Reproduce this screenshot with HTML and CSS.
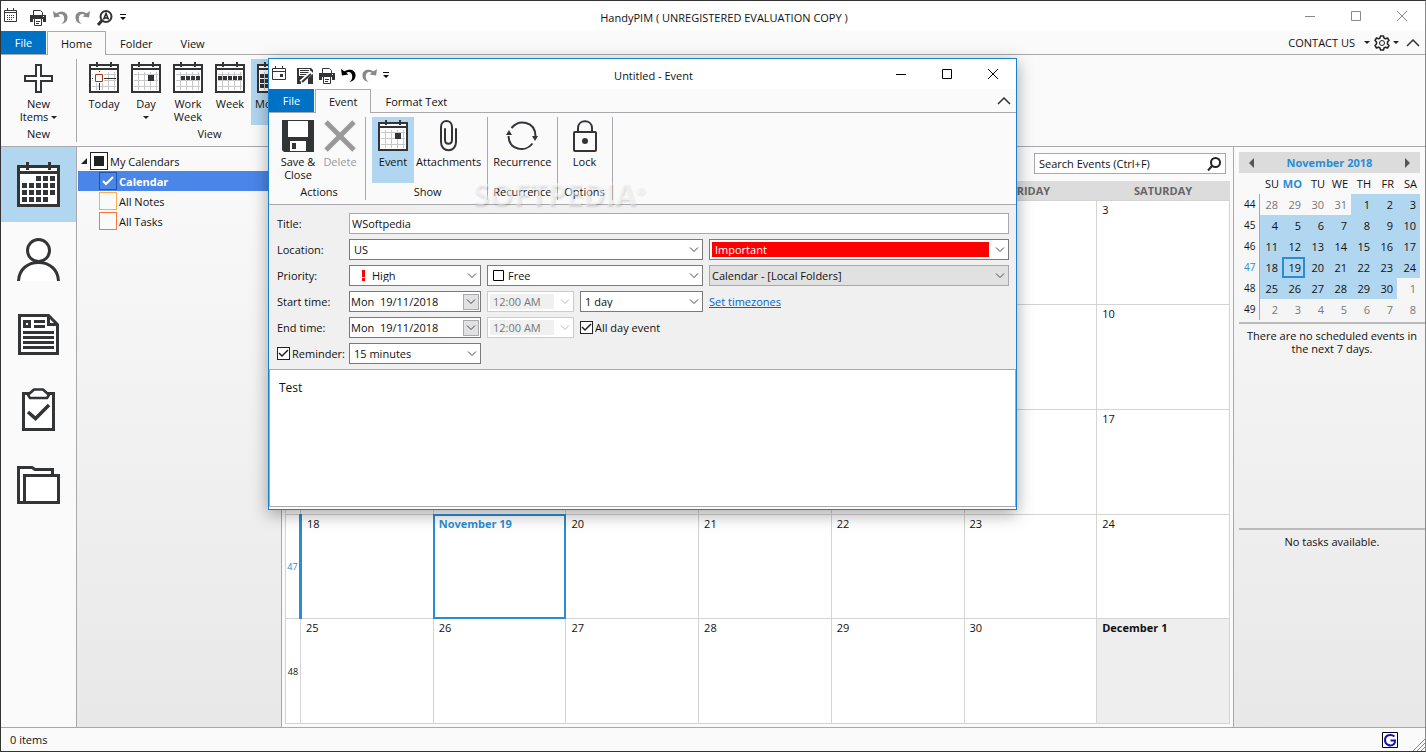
FILE: index.html
```html
<!DOCTYPE html>
<html lang="en">
<head>
    <meta charset="UTF-8">
    <meta name="viewport" content="width=device-width, initial-scale=1.0">
    <title>HandyPIM</title>
    <link rel="stylesheet" href="styles.css">
</head>
<body>
    <!-- shared icons -->
    <svg class="sprite" width="0" height="0" aria-hidden="true">
        <symbol id="cal" viewBox="0 0 30 32">
            <g shape-rendering="crispEdges">
                <path fill="#fff" d="M1 3h28v27H1z"/>
                <path stroke="#c8c8c8" fill="none" stroke-width="1" d="M7.500 10v18M13.500 10v18M19.500 10v18M25.500 10v18M3 12.500h24M3 18.500h24M3 24.500h24"/>
                <path fill="none" stroke="#333436" stroke-width="2" d="M1 3h28v27H1zM1 7h28M8 0v5M22 0v5"/>
            </g>
        </symbol>
        <symbol id="printer" viewBox="0 0 16 16">
            <path fill="#333436" d="M0 5h16v7h-3V9H3v3H0z"/>
            <path fill="#fff" stroke="#333436" d="M3.500 5.500v-5h7l2 2v3zM4.500 8.500h7v7h-7z"/>
            <path stroke="#333436" d="M6 11.500h4M6 13.500h3"/>
            <path fill="#fff" d="M13 6h1v1h-1z"/>
        </symbol>
        <symbol id="undo" viewBox="0 0 16 16">
            <path fill="currentColor" d="M0 1l1 7 7-1-2.500-2C9 3 12 5 12 9c0 3-1 4-3 6 5-1 6.500-4 6.500-7.500C15.500 2 9 0 3.500 3.500z"/>
        </symbol>
        <symbol id="redo" viewBox="0 0 16 16">
            <path fill="currentColor" d="M16 1l-1 7-7-1 2.500-2C7 3 4 5 4 9c0 3 1 4 3 6C2 14 .5 11 .5 7.500.5 2 7 0 12.500 3.500z"/>
        </symbol>
        <symbol id="more" viewBox="0 0 6 7">
            <path fill="#111" d="M0 0h6v1H0zM0 3h6L3 6z"/>
        </symbol>
        <symbol id="up" viewBox="0 0 14 8">
            <path fill="none" stroke="#333" stroke-width="1.500" d="M1 7l6-6 6 6"/>
        </symbol>
        <symbol id="down" viewBox="0 0 6 4">
            <path fill="#222" d="M0 0h6L3 3z"/>
        </symbol>
        <symbol id="min" viewBox="0 0 10 10"><path stroke="currentColor" d="M0 5.500h10"/></symbol>
        <symbol id="max" viewBox="0 0 10 10"><path fill="none" stroke="currentColor" d="M.5.5h9v9h-9z"/></symbol>
        <symbol id="close" viewBox="0 0 10 10"><path stroke="currentColor" d="M0 0l10 10M10 0L0 10"/></symbol>
    </svg>

    <header class="titlebar">
        <div class="quick">
            <svg class="app-icon" width="14" height="15" viewBox="0 0 14 15"><path fill="none" stroke="#333436" d="M.5 2.500h12v11H.5zM0 4.500h13M3.500 0v3M9.500 0v3"/><path stroke="#333436" stroke-dasharray="1 1" d="M3 7.500h8M3 9.500h8M3 11.500h6"/></svg>
            <button aria-label="Print"><svg width="16" height="16"><use href="#printer"/></svg></button>
            <button aria-label="Undo" class="off"><svg width="15" height="15"><use href="#undo"/></svg></button>
            <button aria-label="Redo" class="off"><svg width="15" height="15"><use href="#redo"/></svg></button>
            <button aria-label="Find"><svg width="16" height="16" viewBox="0 0 16 16"><circle cx="9" cy="6.500" r="5.500" fill="#fff" stroke="#333436" stroke-width="2"/><path stroke="#333436" stroke-width="3" d="M5 10.500L1 15"/><path fill="none" stroke="#222" stroke-width="1.500" d="M6.500 9.500L9 3.500l2.500 6M7.500 8h3"/></svg></button>
            <button aria-label="Customize"><svg width="6" height="7"><use href="#more"/></svg></button>
        </div>
        <h1>HandyPIM ( UNREGISTERED EVALUATION COPY )</h1>
        <div class="winbtns">
            <button aria-label="Minimize"><svg width="10" height="10"><use href="#min"/></svg></button>
            <button aria-label="Maximize"><svg width="10" height="10"><use href="#max"/></svg></button>
            <button aria-label="Close"><svg width="10" height="10"><use href="#close"/></svg></button>
        </div>
    </header>

    <nav class="tabs">
        <button class="tab file">File</button>
        <button class="tab active">Home</button>
        <button class="tab">Folder</button>
        <button class="tab">View</button>
        <div class="tabs-right">
            <button>CONTACT US <svg width="6" height="4"><use href="#down"/></svg></button>
            <button aria-label="Settings" class="settings"><svg width="16" height="16" viewBox="0 0 16 16"><path fill="none" stroke="#222" stroke-width="1.500" stroke-linejoin="round" d="M6.500 1h3l.5 2 1.500.8 2-.8 1.500 2.500L13.500 7v2l1.500 1.500-1.500 2.500-2-.8-1.500.8-.5 2h-3L6 13l-1.500-.8-2 .8L1 10.500 2.500 9V7L1 5.500 2.500 3l2 .8L6 3z"/><circle cx="8" cy="8" r="2.500" fill="none" stroke="#222"/></svg><svg width="6" height="4"><use href="#down"/></svg></button>
            <button aria-label="Collapse ribbon"><svg width="14" height="8"><use href="#up"/></svg></button>
        </div>
    </nav>

    <section class="ribbon">
        <div class="group group-new">
            <div class="items">
                <button class="rbtn"><svg width="30" height="32" viewBox="0 0 30 32"><path fill="#fff" stroke="#333436" stroke-width="2" d="M12 3h5v11h11v5H17v11h-5V19H1v-5h11z"/></svg><span>New<br>Items <svg width="6" height="4"><use href="#down"/></svg></span></button>
            </div>
            <div class="caption">New</div>
        </div>
        <div class="group group-view">
            <div class="items">
                <button class="rbtn"><svg width="30" height="32" viewBox="0 0 30 32"><use href="#cal"/><path stroke="#333436" d="M3 16.500h24M10.500 9v19"/><path fill="#fff" d="M4 10h11v11H4z"/><path fill="#fff" stroke="#b03010" d="M6.500 12.500h7v7h-7z"/></svg><span>Today</span></button>
                <button class="rbtn"><svg width="30" height="32" viewBox="0 0 30 32"><use href="#cal"/><path fill="#333436" d="M17 13h6v6h-6z"/></svg><span>Day<br><svg width="6" height="4"><use href="#down"/></svg></span></button>
                <button class="rbtn"><svg width="30" height="32" viewBox="0 0 30 32"><use href="#cal"/><path fill="#333436" d="M8 14h4v4H8zM13 14h4v4h-4zM18 14h4v4h-4zM23 14h4v4h-4z"/></svg><span>Work<br>Week</span></button>
                <button class="rbtn"><svg width="30" height="32" viewBox="0 0 30 32"><use href="#cal"/><path fill="#333436" d="M3 14h4v4H3zM8 14h4v4H8zM13 14h4v4h-4zM18 14h4v4h-4zM23 14h4v4h-4z"/></svg><span>Week</span></button>
                <button class="rbtn on"><svg width="30" height="32" viewBox="0 0 30 32"><use href="#cal"/><path stroke="#333436" stroke-width="4" stroke-dasharray="4 1" d="M3 14h24M3 19h24M3 24h24"/></svg><span>Month</span></button>
            </div>
            <div class="caption">View</div>
        </div>
    </section>

    <main class="workspace">
        <nav class="modules">
            <button class="on" aria-label="Calendar"><svg width="43" height="45" viewBox="0 0 43 45"><path fill="#fff" stroke="#333436" stroke-width="3" d="M1.500 4.500h40v39h-40z"/><path stroke="#333436" stroke-width="3" d="M0 10.500h43M10.500 0v8M32.500 0v8"/><path stroke="#333436" stroke-width="5" stroke-dasharray="5 2" d="M19 16.500h20M5 23.500h33M5 30.500h33M5 37.500h26"/></svg></button>
            <button aria-label="Contacts"><svg width="43" height="44" viewBox="0 0 43 44"><circle cx="21.500" cy="12.500" r="11" fill="#fff" stroke="#333436" stroke-width="3"/><path fill="#fff" stroke="#333436" stroke-width="3" d="M1.500 43C2 31 11 24.500 21.500 24.500S41 31 41.500 43"/></svg></button>
            <button aria-label="Notes"><svg width="41" height="41" viewBox="0 0 41 41"><path fill="#fff" stroke="#333436" stroke-width="3" d="M1.500 1.500h29l9 9v29h-38zM30.500 1.500v9h9"/><path fill="none" stroke="#333436" stroke-width="3" d="M6.500 7.500h5v5h-5zM16 7.500h11M16 12.500h11M5 18.500h31M5 23.500h31M5 28.500h31M5 33.500h31"/></svg></button>
            <button aria-label="Tasks"><svg width="33" height="43" viewBox="0 0 33 43"><path fill="#fff" stroke="#333436" stroke-width="3" d="M1.500 5.500h30v36h-30z"/><path fill="#fff" stroke="#333436" stroke-width="2.500" stroke-linejoin="round" d="M6 7l6-5.500h9L27 7l-2 3H8z"/><path fill="none" stroke="#333436" stroke-width="3.500" d="M6 24l7.500 6.500L27 17"/></svg></button>
            <button aria-label="Folders"><svg width="43" height="38" viewBox="0 0 43 38"><path fill="#fff" stroke="#333436" stroke-width="3" d="M1.500 1.500H15l3 2h17.500v33h-34z"/><path fill="#fff" stroke="#333436" stroke-width="3" d="M7.500 9.500h34v27h-34z"/></svg></button>
        </nav>

        <aside class="tree">
            <label class="root"><svg width="7" height="7"><path fill="#222" d="M6 0v6H0z"/></svg><input type="checkbox" class="mixed"> My Calendars</label>
            <label class="leaf selected"><input type="checkbox" class="cal-check" checked> Calendar</label>
            <label class="leaf"><input type="checkbox" class="notes"> All Notes</label>
            <label class="leaf"><input type="checkbox" class="tasks"> All Tasks</label>
        </aside>

        <section class="month-view">
            <div class="search">
                <input type="text" placeholder="Search Events (Ctrl+F)" aria-label="Search Events">
                <svg width="14" height="14" viewBox="0 0 14 14"><circle cx="8.500" cy="5.500" r="4.500" fill="none" stroke="#222" stroke-width="2"/><path stroke="#222" stroke-width="2" d="M5 9l-4 4.500"/></svg>
            </div>
            <table class="month">
                <thead>
                    <tr><th class="wk"></th><th>SUNDAY</th><th>MONDAY</th><th>TUESDAY</th><th>WEDNESDAY</th><th>THURSDAY</th><th>FRIDAY</th><th>SATURDAY</th></tr>
                </thead>
                <tbody>
                    <tr><th class="wk">44</th><td class="other">28</td><td class="other">29</td><td class="other">30</td><td class="other">31</td><td><b>November 1</b></td><td>2</td><td>3</td></tr>
                    <tr><th class="wk">45</th><td>4</td><td>5</td><td>6</td><td>7</td><td>8</td><td>9</td><td>10</td></tr>
                    <tr><th class="wk">46</th><td>11</td><td>12</td><td>13</td><td>14</td><td>15</td><td>16</td><td>17</td></tr>
                    <tr><th class="wk current">47</th><td>18</td><td class="today">November 19</td><td>20</td><td>21</td><td>22</td><td>23</td><td>24</td></tr>
                    <tr><th class="wk">48</th><td>25</td><td>26</td><td>27</td><td>28</td><td>29</td><td>30</td><td class="other"><b>December 1</b></td></tr>
                </tbody>
            </table>
        </section>

        <aside class="side">
            <div class="mini-head">
                <button aria-label="Previous month"><svg width="5" height="10"><path fill="#555" d="M5 0v10L0 5z"/></svg></button>
                <h2>November 2018</h2>
                <button aria-label="Next month"><svg width="5" height="10"><path fill="#555" d="M0 0v10l5-5z"/></svg></button>
            </div>
            <table class="mini">
                <thead>
                    <tr><th></th><th>SU</th><th class="cur">MO</th><th>TU</th><th>WE</th><th>TH</th><th>FR</th><th>SA</th></tr>
                </thead>
                <tbody>
                    <tr><th>44</th><td class="out">28</td><td class="out">29</td><td class="out">30</td><td class="out">31</td><td>1</td><td>2</td><td>3</td></tr>
                    <tr><th>45</th><td>4</td><td>5</td><td>6</td><td>7</td><td>8</td><td>9</td><td>10</td></tr>
                    <tr><th>46</th><td>11</td><td>12</td><td>13</td><td>14</td><td>15</td><td>16</td><td>17</td></tr>
                    <tr><th class="cur">47</th><td>18</td><td class="now">19</td><td>20</td><td>21</td><td>22</td><td>23</td><td>24</td></tr>
                    <tr><th>48</th><td>25</td><td>26</td><td>27</td><td>28</td><td>29</td><td>30</td><td class="out">1</td></tr>
                    <tr><th>49</th><td class="out">2</td><td class="out">3</td><td class="out">4</td><td class="out">5</td><td class="out">6</td><td class="out">7</td><td class="out">8</td></tr>
                </tbody>
            </table>
            <p class="note">There are no scheduled events in the next 7 days.</p>
            <p class="note">No tasks available.</p>
        </aside>
    </main>

    <footer class="status">
        <span>0 items</span>
        <svg class="g-logo" width="16" height="16" viewBox="0 0 16 16"><path fill="#fff" stroke="#000" d="M.5.5h15v15H.5z"/><path fill="none" stroke="#1414b0" stroke-width="2" d="M12.500 4.500C9 1.500 3 3 3 8s6 7 9 4c1-1 1-2 1-3.500H8.500"/></svg>
        <svg width="12" height="12" viewBox="0 0 12 12"><path stroke="#888" d="M0 12L12 0M4 12l8-8M8 12l4-4"/></svg>
    </footer>

    <!-- event window -->
    <div class="dialog" role="dialog" aria-label="Untitled - Event">
        <header class="titlebar">
            <div class="quick">
                <svg class="app-icon" width="14" height="15" viewBox="0 0 14 15"><path fill="none" stroke="#333436" d="M.5 2.500h13v11H.5zM0 5.500h14M3.500 0v3M10.500 0v3"/><path fill="#333436" d="M8 8h3v3H8z"/></svg>
                <button aria-label="Save"><svg width="16" height="16" viewBox="0 0 16 16"><path fill="#333436" d="M0 0h14l2 2v14H0z"/><path fill="#fff" d="M2 1h11v7H2zM4 11h7v5H4z"/><path stroke="#333436" d="M3 2.500h9M3 4.500h9M3 6.500h8"/><path stroke="#fff" stroke-width="4" d="M4 14L15 4"/><path stroke="#333436" stroke-width="2" d="M5 14l9-8"/></svg></button>
                <button aria-label="Print"><svg width="16" height="16"><use href="#printer"/></svg></button>
                <button aria-label="Undo" class="black"><svg width="15" height="15"><use href="#undo"/></svg></button>
                <button aria-label="Redo" class="off"><svg width="15" height="15"><use href="#redo"/></svg></button>
                <button aria-label="Customize"><svg width="6" height="7"><use href="#more"/></svg></button>
            </div>
            <h1>Untitled - Event</h1>
            <div class="winbtns">
                <button aria-label="Minimize"><svg width="10" height="10"><use href="#min"/></svg></button>
                <button aria-label="Maximize"><svg width="10" height="10"><use href="#max"/></svg></button>
                <button aria-label="Close"><svg width="10" height="10"><use href="#close"/></svg></button>
            </div>
        </header>
        <nav class="tabs">
            <button class="tab file">File</button>
            <button class="tab active">Event</button>
            <button class="tab">Format Text</button>
            <div class="tabs-right">
                <button aria-label="Collapse ribbon"><svg width="14" height="8"><use href="#up"/></svg></button>
            </div>
        </nav>
        <section class="ribbon">
            <div class="group group-actions">
                <div class="items">
                    <button class="rbtn"><svg width="32" height="32" viewBox="0 0 32 32"><path fill="#333436" d="M0 0h32v32H2l-2-2z"/><path fill="#fff" d="M6 1h20v16H6zM8 21h16v10H8z"/><path fill="#333436" d="M10 23h4v6h-4z"/></svg><span>Save &amp;<br>Close</span></button>
                    <button class="rbtn" disabled><svg width="32" height="32" viewBox="0 0 32 32"><path stroke="#999" stroke-width="5" d="M2 2l28 28M30 2L2 30"/></svg><span>Delete</span></button>
                </div>
                <div class="caption">Actions</div>
            </div>
            <div class="group group-show">
                <div class="items">
                    <button class="rbtn on"><svg width="30" height="32" viewBox="0 0 30 32"><use href="#cal"/><path fill="#333436" d="M17 13h6v6h-6z"/></svg><span>Event</span></button>
                    <button class="rbtn wide"><svg width="18" height="32" viewBox="0 0 18 32"><path fill="none" stroke="#333436" stroke-width="2" stroke-linecap="round" d="M5 9v11c0 5 7 5 7 0V7c0-8-11-8-11 0v15c0 11 15 11 15 0V9"/></svg><span>Attachments</span></button>
                </div>
                <div class="caption">Show</div>
            </div>
            <div class="group group-recur">
                <div class="items">
                    <button class="rbtn wide"><svg width="32" height="32" viewBox="0 0 32 32"><path fill="none" stroke="#333436" stroke-width="2" d="M5.500 8C13-1 29 1 29.500 16M26.500 23.500C19 33 3 30 2.500 16"/><path fill="#333436" d="M26 16h6l-3 5zM0 15h6l-3-5z"/></svg><span>Recurrence</span></button>
                </div>
                <div class="caption">Recurrence</div>
            </div>
            <div class="group group-options">
                <div class="items">
                    <button class="rbtn"><svg width="24" height="32" viewBox="0 0 24 32"><rect x="1" y="12" width="22" height="19" rx="1" fill="none" stroke="#333436" stroke-width="2"/><path fill="none" stroke="#333436" stroke-width="2" d="M5 12V8c0-9 14-9 14 0v4"/><circle cx="12" cy="21" r="3" fill="#333436"/></svg><span>Lock</span></button>
                </div>
                <div class="caption">Options</div>
            </div>
        </section>
        <form class="event-form">
            <label for="title">Title:</label>
            <input id="title" class="field full" type="text" value="WSoftpedia">

            <label for="location">Location:</label>
            <select id="location" class="field to-mid"><option>US</option></select>
            <div class="field pick right important">
                <select aria-label="Label"><option>Important</option></select>
            </div>

            <label for="priority">Priority:</label>
            <div class="field pick first">
                <svg width="4" height="11" viewBox="0 0 4 11"><path fill="#f00" d="M0 0h3v7H0zM0 8h3v3H0z"/></svg>
                <select id="priority"><option>High</option></select>
            </div>
            <div class="field pick middle free">
                <svg width="11" height="11"><path fill="#fff" stroke="#000" d="M.5.5h10v10H.5z"/></svg>
                <select aria-label="Show as"><option>Free</option></select>
            </div>
            <select class="field right grey" aria-label="Folder"><option>Calendar - [Local Folders]</option></select>

            <label for="start">Start time:</label>
            <div class="field date first"><input id="start" type="text" value="Mon  19/11/2018"><button type="button" aria-label="Pick start date"></button></div>
            <div class="field pick time off"><select aria-label="Start hour" disabled><option>12:00 AM</option></select></div>
            <select class="field length" aria-label="Duration"><option>1 day</option></select>
            <a class="right" href="#">Set timezones</a>

            <label for="end">End time:</label>
            <div class="field date first"><input id="end" type="text" value="Mon  19/11/2018"><button type="button" aria-label="Pick end date"></button></div>
            <div class="field pick time off"><select aria-label="End hour" disabled><option>12:00 AM</option></select></div>
            <label class="check length"><input type="checkbox" checked> All day event</label>

            <label class="check"><input type="checkbox" checked> Reminder:</label>
            <select class="field first" aria-label="Reminder time"><option>15 minutes</option></select>
        </form>
        <textarea class="body-text" aria-label="Event text">Test</textarea>
        <div class="watermark">SOFTPEDIA<sup>®</sup></div>
    </div>
</body>
</html>
```
FILE: styles.css
```css
* {
    box-sizing: border-box;
}
body {
    margin: 0;
    min-height: 100vh;
    display: flex;
    flex-direction: column;
    position: relative;
    font-family: "Open Sans", "Noto Sans", sans-serif;
    font-size: 11px;
    line-height: 13px;
    color: #111;
    background: #fafafa;
    border: 1px solid #333;
    border-right-color: #888;
}
button, input, select, textarea {
    font: inherit;
    color: inherit;
    margin: 0;
}
button {
    background: none;
    border: none;
    padding: 0;
}
svg {
    display: block;
    flex: none;
}
span svg {
    display: inline-block;
    vertical-align: middle;
}
h1, h2, p {
    margin: 0;
    font-size: inherit;
    font-weight: normal;
}
.sprite {
    position: absolute;
}

/* title bar */
.titlebar {
    display: grid;
    grid-template-columns: 1fr auto 1fr;
    align-items: center;
    height: 30px;
    background: #fff;
}
.titlebar h1 {
    padding: 2px 0 0 22px;
}
.quick {
    display: flex;
    align-items: center;
    gap: 7px;
    padding: 3px 0 0 3px;
}
.app-icon {
    margin: 0 5px 4px 0;
}
.off {
    color: #888;
}
.black {
    color: #000;
}
.winbtns {
    display: flex;
    justify-content: flex-end;
    gap: 36px;
    padding: 0 18px 1px 0;
    color: #888;
}

/* tabs */
.tabs {
    display: flex;
    height: 24px;
    border-bottom: 1px solid #a9a9ad;
}
.tab {
    padding: 0 14px;
    height: 24px;
}
.file {
    height: 23px;
    width: 45px;
    margin-right: 1px;
    padding: 0;
    background: #0072c6;
    color: #fff;
}
.tab.active {
    background: #fafafa;
    border: 1px solid #a9a9ad;
    border-bottom: none;
    padding: 0 13px;
}
.tabs-right {
    display: flex;
    align-items: center;
    gap: 7px;
    margin-left: auto;
    padding-right: 5px;
}
.tabs-right button {
    display: flex;
    align-items: center;
    gap: 9px;
}
.tabs-right .settings {
    gap: 3px;
    margin-left: -3px;
}

/* ribbon */
.ribbon {
    display: flex;
    height: 92px;
    padding: 4px 0;
    border-bottom: 1px solid #a9a9ad;
}
.group {
    display: flex;
    flex-direction: column;
    border-right: 1px solid #a9a9ad;
    padding: 0 4px;
}
.group .items {
    display: flex;
    height: 66px;
}
.caption {
    text-align: center;
    padding-top: 2px;
}
.rbtn {
    display: flex;
    flex-direction: column;
    align-items: center;
    width: 42px;
    padding-top: 3px;
    gap: 3px;
}
.rbtn.wide {
    width: auto;
    min-width: 60px;
    padding: 3px 2px 0;
}
.rbtn.on {
    background: #b1d6f0;
}
.rbtn:disabled {
    color: #999;
}
.rbtn span {
    white-space: nowrap;
}
.group-new {
    width: 76px;
}
.group-new .items {
    justify-content: center;
}
.group-view {
    min-width: 266px;
    padding: 0 6px;
}
.group-actions {
    padding-left: 8px;
}
.group-show {
    padding-left: 6px;
}
.group-recur {
    padding: 0 3px;
}
.group-options {
    padding: 0 6px;
}

/* workspace */
.workspace {
    flex: 1;
    display: flex;
}
.modules {
    width: 76px;
    border-right: 1px solid #a9a9ad;
}
.modules button {
    display: flex;
    align-items: center;
    justify-content: center;
    width: 100%;
    height: 75px;
}
.modules .on {
    background: #b1d6f0;
}
.tree {
    width: 205px;
    padding: 4px 0 0 1px;
    background: linear-gradient(#fafafa, #e8e8e8);
    border-right: 1px solid #a9a9ad;
}
.tree label {
    display: flex;
    align-items: center;
    gap: 2px;
    height: 20px;
}
.tree .root {
    padding-left: 3px;
}
.tree .leaf {
    padding-left: 21px;
}
.tree .selected {
    background: #4a86e8;
    color: #fff;
    font-weight: bold;
}
.tree input {
    appearance: none;
    width: 18px;
    height: 18px;
    border: 1px solid #222;
    background: #fafafa;
}
.tree .mixed {
    background: linear-gradient(#222, #222) center / 10px 10px no-repeat #fff;
}
.tree .cal-check {
    border-color: #1c54b4;
    background: url("data:image/svg+xml,%3Csvg xmlns='http://www.w3.org/2000/svg' width='12' height='10'%3E%3Cpath fill='none' stroke='%23fff' stroke-width='2' d='M1 5l3 3 7-7'/%3E%3C/svg%3E") center no-repeat;
}
.tree .notes {
    border-color: #ffad46;
}
.tree .tasks {
    border-color: #ff7537;
}

.month-view {
    flex: 1;
    display: flex;
    flex-direction: column;
    gap: 7px;
    padding: 6px 3px 3px;
}
.search {
    display: flex;
    align-items: center;
    align-self: flex-end;
    width: 192px;
    height: 21px;
    margin-right: 4px;
    padding: 0 4px;
    background: #fff;
    border: 1px solid #a9a9ad;
}
.search input {
    flex: 1;
    min-width: 0;
    border: none;
    padding: 0;
    outline: none;
}
.search input::placeholder {
    color: #111;
}
.month {
    flex: 1;
    width: 100%;
    table-layout: fixed;
    border-collapse: collapse;
    background: #fff;
}
.month thead tr {
    height: 19px;
}
.month thead th {
    background: #dcdcdc;
    color: #666;
    padding: 0;
}
.month td {
    border: 1px solid #d4d4d4;
    vertical-align: top;
    padding: 2px 5px;
}
.month .wk {
    width: 15px;
    padding: 0;
    font-size: 9px;
    font-weight: normal;
}
.month tbody .wk {
    border: 1px solid #d4d4d4;
}
.month tbody .current {
    color: #2a8dd4;
    border-right: 3px solid #2a8dd4;
}
.month .today {
    outline: 2px solid #2a8dd4;
    outline-offset: -2px;
    color: #2a8dd4;
    font-weight: bold;
}
.month .other {
    background: #eee;
}

/* right column */
.side {
    display: flex;
    flex-direction: column;
    width: 192px;
    padding: 5px 0 0 5px;
    background: linear-gradient(#fafafa, #e8e8e8);
    border-left: 1px solid #a9a9ad;
}
.mini-head {
    display: flex;
    align-items: center;
    justify-content: space-between;
    width: 181px;
    height: 21px;
    padding: 0 10px;
    background: #dcdcdc;
}
.mini-head h2 {
    color: #2a8dd4;
    font-weight: bold;
}
.mini {
    width: 181px;
    table-layout: fixed;
    border-collapse: collapse;
    margin-bottom: 2px;
}
.mini th, .mini td {
    height: 21px;
    padding: 0 4px 0 0;
    text-align: right;
    font-weight: normal;
    background: #b1d6f0;
}
.mini th {
    background: none;
    padding-right: 3px;
}
.mini tr > :first-child {
    width: 20px;
}
.mini tbody th {
    font-size: 10px;
    padding-right: 3px;
    border-right: 1px solid #a9a9ad;
}
.mini .cur {
    color: #2a8dd4;
}
.mini thead .cur {
    font-weight: bold;
}
.mini .out {
    background: none;
    color: #777;
}
.mini .now {
    outline: 2px solid #2a8dd4;
    outline-offset: -2px;
}
.note {
    flex: 1;
    padding: 5px 4px;
    border-top: 2px solid #bbb;
    text-align: center;
}
.note:not(:last-child) {
    margin-bottom: 6px;
}

/* status bar */
.status {
    display: flex;
    align-items: center;
    height: 24px;
    padding-left: 9px;
    border-top: 1px solid #a9a9ad;
}
.g-logo {
    margin: 0 15px 0 auto;
}
.status svg:last-child {
    align-self: flex-end;
}

/* event window */
.dialog {
    position: absolute;
    left: 267px;
    top: 57px;
    width: 749px;
    display: flex;
    flex-direction: column;
    background: #fafafa;
    border: 1px solid #1a80d0;
    box-shadow: 0 4px 16px rgba(0, 0, 0, 0.35);
}
.dialog .quick {
    gap: 6px;
}
.dialog .winbtns {
    color: #000;
}
.event-form {
    display: grid;
    grid-template-columns: 66px 132px 87px 123px 1fr;
    grid-auto-rows: 21px;
    column-gap: 6px;
    row-gap: 5px;
    align-items: center;
    padding: 8px 7px 5px 8px;
    background: #f0f0f0;
}
.event-form > label {
    grid-column: 1;
    margin-right: -6px;
}
.field {
    height: 21px;
    min-width: 0;
    padding: 0 4px;
    border: 1px solid #7a7a7a;
    border-radius: 0;
    background-color: #fff;
}
.event-form .full {
    grid-column: 2 / 6;
    border-color: #a9a9ad;
    padding: 0 2px;
}
.event-form .to-mid {
    grid-column: 2 / 5;
}
.event-form .first {
    grid-column: 2;
}
.event-form .middle {
    grid-column: 3 / 5;
}
.event-form .time {
    grid-column: 3;
}
.event-form .length {
    grid-column: 4;
}
.event-form .right {
    grid-column: 5;
}
select, .date button {
    appearance: none;
    background-image: url("data:image/svg+xml,%3Csvg xmlns='http://www.w3.org/2000/svg' width='10' height='6'%3E%3Cpath fill='none' stroke='%23444' d='M1 .5l4 4 4-4'/%3E%3C/svg%3E");
    background-repeat: no-repeat;
    background-position: right 3px center;
}
.event-form .grey {
    background-color: #e1e1e1;
    border-color: #a9a9ad;
    padding: 0 2px;
}
.pick {
    display: flex;
    align-items: center;
    gap: 4px;
    padding: 0 0 0 5px;
}
.pick select {
    flex: 1;
    min-width: 0;
    height: 19px;
    padding: 0;
    border: none;
    background-color: transparent;
}
.pick.first {
    gap: 6px;
    padding-left: 12px;
}
.important {
    background: linear-gradient(#f00, #f00) 2px 2px / calc(100% - 21px) 15px no-repeat #fff;
    color: #fff;
}
.pick.off {
    color: #777;
    background: linear-gradient(#f0f0f0, #f0f0f0) 2px 2px / 64px 15px no-repeat #fff;
    border-color: #ccc;
}
.pick.off select {
    opacity: 1;
    background-image: url("data:image/svg+xml,%3Csvg xmlns='http://www.w3.org/2000/svg' width='10' height='6'%3E%3Cpath fill='none' stroke='%23bbb' d='M1 .5l4 4 4-4'/%3E%3C/svg%3E");
}
.date {
    display: flex;
    align-items: center;
    padding: 0 1px 0 1px;
}
.date input {
    flex: 1;
    min-width: 0;
    padding: 0;
    border: none;
    background: none;
    white-space: pre;
}
.date button {
    width: 16px;
    height: 16px;
    border: 1px solid #a9a9ad;
    background-color: #e1e1e1;
    background-position: center;
}
.event-form a {
    color: #0066cc;
}
.check {
    display: flex;
    align-items: center;
    gap: 2px;
    white-space: nowrap;
}
.check input {
    appearance: none;
    width: 13px;
    height: 13px;
    border: 1px solid #222;
    background: url("data:image/svg+xml,%3Csvg xmlns='http://www.w3.org/2000/svg' width='11' height='9'%3E%3Cpath fill='none' stroke='%23222' stroke-width='1.500' d='M1 4l3 3 6-6'/%3E%3C/svg%3E") center no-repeat #fff;
}
.body-text {
    height: 138px;
    margin-bottom: 2px;
    padding: 10px 9px;
    border: 1px solid #a9a9ad;
    background: #fff;
    font-size: 12px;
    line-height: 16px;
    resize: none;
    outline: none;
}
.watermark {
    position: absolute;
    left: 204px;
    top: 117px;
    font-size: 30px;
    font-weight: bold;
    line-height: 36px;
    color: rgba(255, 255, 255, 0.5);
    text-shadow: 1px 2px 2px rgba(0, 0, 0, 0.12);
    pointer-events: none;
}
.watermark sup {
    font-size: 11px;
    line-height: 0;
}
```
